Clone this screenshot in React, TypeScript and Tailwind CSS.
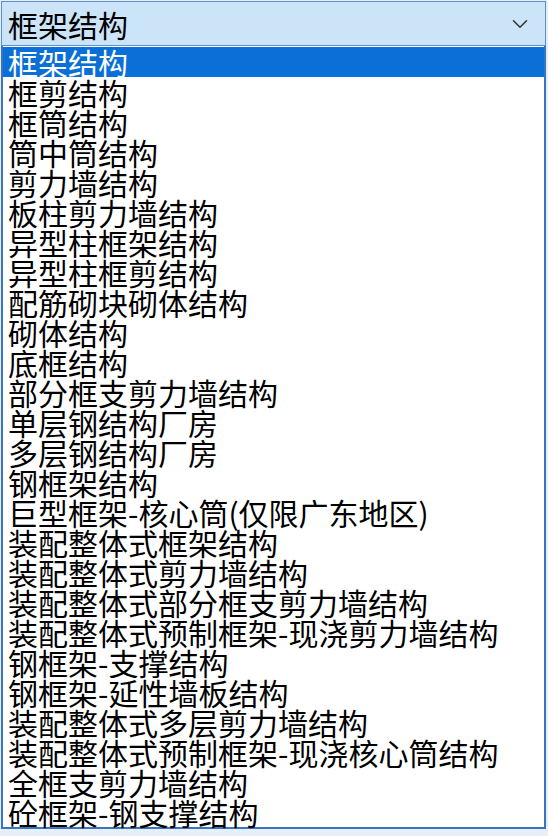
import React, { useState } from 'react';
import { ChevronDown } from 'lucide-react';

const OPTIONS = [
  '框架结构',
  '框剪结构',
  '框筒结构',
  '筒中筒结构',
  '剪力墙结构',
  '板柱剪力墙结构',
  '异型柱框架结构',
  '异型柱框剪结构',
  '配筋砌块砌体结构',
  '砌体结构',
  '底框结构',
  '部分框支剪力墙结构',
  '单层钢结构厂房',
  '多层钢结构厂房',
  '钢框架结构',
  '巨型框架-核心筒(仅限广东地区)',
  '装配整体式框架结构',
  '装配整体式剪力墙结构',
  '装配整体式部分框支剪力墙结构',
  '装配整体式预制框架-现浇剪力墙结构',
  '钢框架-支撑结构',
  '钢框架-延性墙板结构',
  '装配整体式多层剪力墙结构',
  '装配整体式预制框架-现浇核心筒结构',
  '全框支剪力墙结构',
  '砼框架-钢支撑结构',
];

const App: React.FC = () => {
  const [selected, setSelected] = useState(0);

  return (
    <div
      className="w-[548px] h-[836px] bg-[#e6eef7] pt-[1px] pl-[1px] overflow-hidden"
      style={{ fontFamily: '"Noto Sans CJK SC", "Noto Sans", sans-serif' }}
    >
      {/* combo box */}
      <div className="w-[545px] h-[45px] bg-[#cce4f7] border border-[#5b8fcb] flex items-center justify-between pl-[6px] pr-[12px]">
        <span className="text-[30px] leading-[30px] text-black">{OPTIONS[selected]}</span>
        <ChevronDown size={26} strokeWidth={1.4} className="text-[#333]" />
      </div>

      {/* dropdown list */}
      <div className="w-[545px] bg-white border-x-2 border-b-2 border-[#3a74bd] pt-[1px]">
        {OPTIONS.map((opt, i) => (
          <div
            key={opt}
            onClick={() => setSelected(i)}
            className={
              i === selected
                ? 'h-[30px] pl-[5px] bg-[#0a6fd6] text-white text-[30px] leading-[30px] whitespace-nowrap'
                : 'h-[30px] pl-[5px] text-black text-[30px] leading-[30px] whitespace-nowrap'
            }
          >
            {opt}
          </div>
        ))}
      </div>
    </div>
  );
};

export default App;
